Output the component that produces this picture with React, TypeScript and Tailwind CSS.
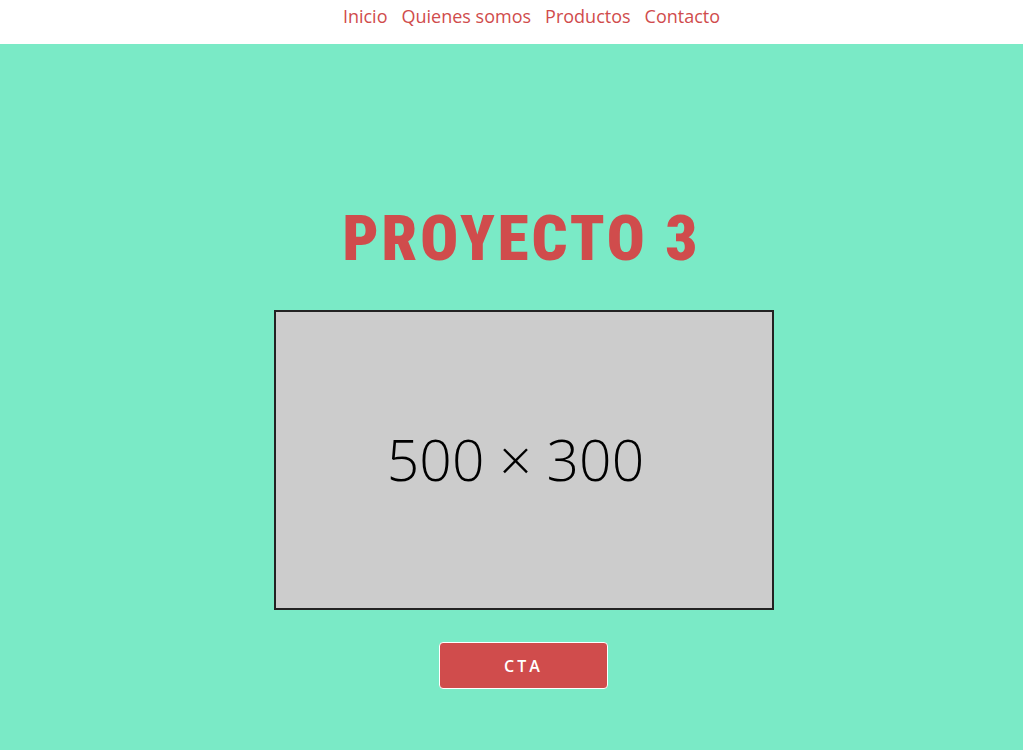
const links = [
  { label: "Inicio", href: "#inicio" },
  { label: "Quienes somos", href: "#quienes-somos" },
  { label: "Productos", href: "#productos" },
  { label: "Contacto", href: "#contacto" },
];

export default function App() {
  return (
    <div className="flex min-h-screen flex-col bg-white font-['Open_Sans',sans-serif]">
      <header className="h-11 pl-10">
        <nav>
          <ul className="flex justify-center gap-3.5 pt-1 text-lg leading-6 text-[#d04c4c]">
            {links.map((link) => (
              <li key={link.href}>
                <a href={link.href}>{link.label}</a>
              </li>
            ))}
          </ul>
        </nav>
      </header>
      <main className="flex grow flex-col items-center bg-[#7aeac6] pt-40 pb-14 pl-6">
        <h1 className="pr-1 font-['Roboto_Condensed',Roboto,sans-serif] text-[63px] leading-[70px] font-black tracking-[3px] text-[#d04c4c] uppercase">
          Proyecto 3
        </h1>
        <figure className="mt-9 flex h-[300px] w-full max-w-[500px] items-center justify-center border-2 border-[#222] bg-[#ccc] pr-4 text-[57px] font-light text-black">
          500 × 300
        </figure>
        <button
          type="button"
          className="mt-8 h-[47px] w-[169px] rounded border border-white bg-[#d04c4c] text-base font-semibold tracking-[3px] text-white"
        >
          CTA
        </button>
      </main>
    </div>
  );
}
